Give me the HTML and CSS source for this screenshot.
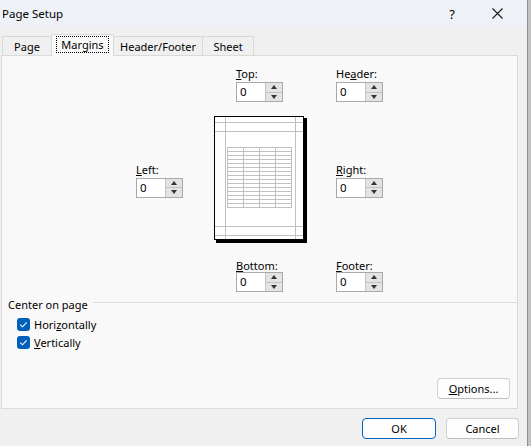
FILE: index.html
```html
<!DOCTYPE html>
<html>
<head>
<meta charset="utf-8">
<link rel="stylesheet" href="styles.css">
</head>
<body>
<div class="window">
  <div class="titlebar">
    <span class="title">Page Setup</span>
    <span class="tb-btn help">?</span>
    <span class="tb-btn"><svg width="11" height="11" viewBox="0 0 11 11"><path d="M0.5 0.5 L10.5 10.5 M10.5 0.5 L0.5 10.5" stroke="#1a1a1a" stroke-width="1.1" fill="none"/></svg></span>
  </div>
  <div class="tabs">
    <div class="tab t-page">Page</div>
    <div class="tab active t-margins"><span class="focus">Margins</span></div>
    <div class="tab t-hf">Header/Footer</div>
    <div class="tab t-sheet">Sheet</div>
  </div>
  <div class="panel">
    <div class="row row-top">
      <div class="field">
        <span class="lbl"><u>T</u>op:</span>
        <div class="spin"><span class="spin-val">0</span><span class="spin-btns"><span class="sb up"></span><span class="sb down"></span></span></div>
      </div>
      <div class="field">
        <span class="lbl">He<u>a</u>der:</span>
        <div class="spin"><span class="spin-val">0</span><span class="spin-btns"><span class="sb up"></span><span class="sb down"></span></span></div>
      </div>
    </div>
    <div class="row row-mid">
      <div class="field f-left">
        <span class="lbl"><u>L</u>eft:</span>
        <div class="spin"><span class="spin-val">0</span><span class="spin-btns"><span class="sb up"></span><span class="sb down"></span></span></div>
      </div>
      <div class="preview">
        <svg width="93" height="127" viewBox="0 0 93 127">
          <rect x="2" y="2" width="91" height="125" fill="#000"/>
          <rect x="0.5" y="0.5" width="89" height="123" fill="#fff" stroke="#000" stroke-width="1"/>
          <g stroke="#c0c0c0" stroke-width="1" fill="none">
            <path d="M11.5 1 V123 M81.5 1 V123 M1 6.5 H89 M1 15.5 H89 M1 110.5 H89 M1 119.5 H89"/>
            <rect x="13.5" y="31.5" width="64" height="60"/>
            <path d="M29.5 31.5 V91.5 M45.5 31.5 V91.5 M61.5 31.5 V91.5"/>
            <path d="M13.5 35.5 H77.5 M13.5 39.5 H77.5 M13.5 43.5 H77.5 M13.5 47.5 H77.5 M13.5 51.5 H77.5 M13.5 55.5 H77.5 M13.5 59.5 H77.5 M13.5 63.5 H77.5 M13.5 67.5 H77.5 M13.5 71.5 H77.5 M13.5 75.5 H77.5 M13.5 79.5 H77.5 M13.5 83.5 H77.5 M13.5 87.5 H77.5"/>
          </g>
        </svg>
      </div>
      <div class="field">
        <span class="lbl"><u>R</u>ight:</span>
        <div class="spin"><span class="spin-val">0</span><span class="spin-btns"><span class="sb up"></span><span class="sb down"></span></span></div>
      </div>
    </div>
    <div class="row row-bot">
      <div class="field">
        <span class="lbl lbl-tight"><u>B</u>ottom:</span>
        <div class="spin"><span class="spin-val">0</span><span class="spin-btns"><span class="sb up"></span><span class="sb down"></span></span></div>
      </div>
      <div class="field">
        <span class="lbl lbl-tight"><u>F</u>ooter:</span>
        <div class="spin"><span class="spin-val">0</span><span class="spin-btns"><span class="sb up"></span><span class="sb down"></span></span></div>
      </div>
    </div>
    <div class="group-title"><span>Center on page</span><span class="rule"></span></div>
    <div class="check first">
      <svg class="cb" width="13" height="13" viewBox="0 0 13 13"><rect x="0" y="0" width="13" height="13" rx="3" fill="#005fb8"/><path d="M3.3 6.7 L5.5 8.8 L9.7 4.4" stroke="#fff" stroke-width="1.1" fill="none"/></svg>
      <span>Hori<u>z</u>ontally</span>
    </div>
    <div class="check">
      <svg class="cb" width="13" height="13" viewBox="0 0 13 13"><rect x="0" y="0" width="13" height="13" rx="3" fill="#005fb8"/><path d="M3.3 6.7 L5.5 8.8 L9.7 4.4" stroke="#fff" stroke-width="1.1" fill="none"/></svg>
      <span><u>V</u>ertically</span>
    </div>
    <div class="options-row"><button class="btn"><u>O</u>ptions...</button></div>
  </div>
  <div class="footer">
    <button class="btn primary">OK</button>
    <button class="btn b-cancel">Cancel</button>
  </div>
</div>
<div class="edge"></div>
</body>
</html>
```

FILE: styles.css
```css
html, body {
  margin: 0;
  padding: 0;
}
body {
  width: 531px;
  height: 446px;
  overflow: hidden;
  display: flex;
  background: #f0f0f0;
  font-family: "Noto Sans", "Segoe UI", sans-serif;
  font-size: 11px;
  color: #000;
}
.window {
  width: 527px;
  display: flex;
  flex-direction: column;
}
.edge {
  width: 3px;
  background: #c2c2c2;
  border-left: 1px solid #8e8e8e;
}
.titlebar {
  height: 27px;
  display: flex;
  align-items: center;
  background: #eef2f7;
  padding: 0 14px 0 2px;
  font-size: 11.5px;
}
.title {
  flex: 1;
}
.tb-btn {
  width: 32px;
  display: flex;
  justify-content: center;
  align-items: center;
}
.help {
  margin-right: 13px;
  font-size: 13px;
}
.tabs {
  height: 28px;
  display: flex;
  align-items: flex-end;
  padding-left: 2px;
}
.tab {
  height: 19px;
  box-sizing: border-box;
  border: 1px solid #d9d9d9;
  border-bottom: none;
  margin-right: -1px;
  display: flex;
  align-items: center;
  justify-content: center;
  background: #f0f0f0;
  padding-top: 1px;
}
.t-page { width: 50px; }
.t-margins { width: 63px; }
.t-hf { width: 90px; }
.t-sheet { width: 52px; }
.tab.active {
  height: 22px;
  margin-bottom: -1px;
  background: #f9f9f9;
  position: relative;
  z-index: 1;
  padding-top: 0;
  padding-bottom: 2px;
}
.focus {
  outline: 1px dotted #000;
  outline-offset: 0;
  padding: 0 4px;
  line-height: 15px;
}
.panel {
  margin-left: 1px;
  width: 517px;
  height: 354px;
  box-sizing: border-box;
  border: 1px solid #dadada;
  background: #f9f9f9;
  display: flex;
  flex-direction: column;
}
.row {
  display: flex;
}
.row-top {
  padding: 10px 0 0 234px;
}
.row-mid {
  margin-top: 14px;
  padding-left: 134px;
  align-items: center;
}
.row-bot {
  margin-top: 17px;
  padding-left: 234px;
}
.field {
  width: 100px;
  display: flex;
  flex-direction: column;
}
.f-left {
  width: 78px;
}
.preview {
  width: 122px;
  display: flex;
}
.lbl {
  line-height: 16px;
  height: 16px;
}
.lbl-tight {
  line-height: 12px;
  height: 12px;
}
.spin {
  width: 47px;
  height: 20px;
  box-sizing: border-box;
  border: 1px solid #a9a9a9;
  background: #fff;
  display: flex;
}
.spin-val {
  flex: 1;
  padding-left: 3px;
  line-height: 18px;
  font-size: 11.5px;
}
.spin-btns {
  width: 16px;
  display: flex;
  flex-direction: column;
  background: #e3e3e3;
  border-left: 1px solid #c4c4c4;
}
.sb {
  flex: 1;
  display: flex;
  align-items: center;
  justify-content: center;
}
.sb.up {
  border-bottom: 1px solid #c4c4c4;
}
.sb.up::after {
  content: "";
  border-left: 3.5px solid transparent;
  border-right: 3.5px solid transparent;
  border-bottom: 4px solid #333;
}
.sb.down::after {
  content: "";
  border-left: 3.5px solid transparent;
  border-right: 3.5px solid transparent;
  border-top: 4px solid #333;
}
.group-title {
  margin-top: 5px;
  padding-left: 6px;
  display: flex;
  line-height: 16px;
}
.rule {
  flex: 1;
  align-self: flex-start;
  margin-top: 5px;
  margin-left: 5px;
  border-top: 1px solid #dcdcdc;
}
.check {
  height: 18px;
  display: flex;
  align-items: center;
  padding-left: 15px;
  gap: 4px;
}
.check.first {
  margin-top: 2px;
}
.cb {
  display: block;
}
.options-row {
  margin-top: auto;
  display: flex;
  justify-content: flex-end;
  padding: 0 7px 9px 0;
}
.btn {
  width: 73px;
  height: 21px;
  box-sizing: border-box;
  border: 1px solid #d0d0d0;
  border-bottom-color: #bdbdbd;
  border-radius: 4px;
  background: #fdfdfd;
  font-family: inherit;
  font-size: 11px;
  color: #000;
  padding: 0;
  display: flex;
  align-items: center;
  justify-content: center;
}
.footer {
  display: flex;
  justify-content: flex-end;
  gap: 10px;
  padding: 9px 8px 0 0;
}
.primary {
  width: 74px;
  border-color: #0067c0;
}
```
